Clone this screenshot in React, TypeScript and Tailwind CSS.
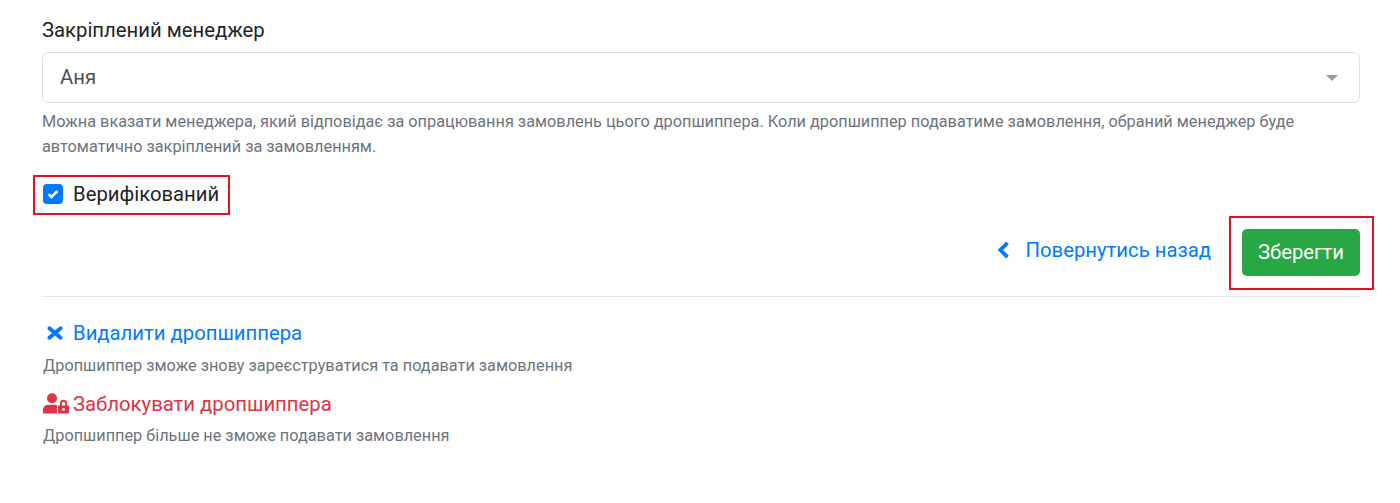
export default function App() {
  return (
    <div className="h-[503px] bg-white px-[42px] pt-[18px] font-['Roboto',sans-serif] text-[#212529] w-[1400px] overflow-hidden">
      <div className="w-[1318px]">
        <div className="text-[20.3px] leading-[24px]">Закріплений менеджер</div>
        <div className="mt-[10px] h-[51px] rounded-[6px] border border-[#dcdfe3] flex items-center justify-between pl-[17px] pr-[21px] text-[20.3px] text-[#495057]">
          <span>Аня</span>
          <span className="w-0 h-0 border-x-[6px] border-x-transparent border-t-[6px] border-t-[#999999]" />
        </div>
        <div className="mt-[6px] text-[16.3px] leading-[25px] text-[#6c757d]">
          Можна вказати менеджера, який відповідає за опрацювання замовлень цього дропшиппера. Коли дропшиппер подаватиме замовлення, обраний менеджер буде автоматично закріплений за замовленням.
        </div>
        <div className="mt-[16px] flex items-center h-[37px]">
          <div className="relative flex items-center gap-[10px] ml-px">
            <span className="w-[20px] h-[20px] rounded-[4px] bg-[#007bff] flex items-center justify-center">
              <svg width="12" height="10" viewBox="0 0 12 10" fill="none"><path d="M1.6 5.2 4.5 8 10.4 2" stroke="#fff" strokeWidth="2.6" /></svg>
            </span>
            <span className="text-[20.3px] leading-[24px]">Верифікований</span>
            <div className="absolute -left-[10px] -top-[7px] -bottom-[9px] -right-[11px] border-2 border-[#e3121f]" />
          </div>
        </div>
        <div className="mt-[17px] flex items-center justify-end">
          <a className="flex items-center text-[20.3px] leading-[24px] -mt-[5px] text-[#007bff]">
            <svg width="13" height="20" viewBox="0 0 13 20" className="mr-[15px]" fill="none"><path d="M9.5 2.8 2.4 10 9.5 17.2" stroke="#007bff" strokeWidth="3.8" /></svg>
            Повернутись назад
          </a>
          <div className="relative ml-[31px]">
            <button className="block w-[118px] h-[47px] rounded-[5px] bg-[#28a745] text-white text-[20.3px]">Зберегти</button>
            <div className="absolute -left-[13px] -top-[13px] -bottom-[14px] -right-[14px] border-2 border-[#e3121f]" />
          </div>
        </div>
        <div className="mt-[20px] border-t border-[#e5e7e9]" />
        <a className="mt-[24px] flex items-center h-[24px] text-[20.3px] text-[#007bff]">
          <svg width="16" height="14" viewBox="0 0 16 14" className="ml-[5px] mr-[10px]" fill="none"><path d="M2.4 2.2 13.6 11.8M13.6 2.2 2.4 11.8" stroke="#007bff" strokeWidth="3.8" strokeLinecap="round" /></svg>
          Видалити дропшиппера
        </a>
        <div className="mt-[9px] ml-px text-[16.3px] leading-[24px] text-[#6c757d]">Дропшиппер зможе знову зареєструватися та подавати замовлення</div>
        <a className="mt-[14px] flex items-center h-[24px] text-[20.3px] text-[#dc3545]">
          <svg width="26" height="21" viewBox="0 0 26 21" className="ml-px mr-[4px] -mt-[2px]" fill="#dc3545">
            <circle cx="9" cy="5.2" r="5" />
            <path d="M1 20.5c-.6 0-1-.4-1-1v-2.5c0-3 2.4-5.2 5.2-5.2h6.6c1 0 1.6.2 2.2.5v8.2H1z" />
            <path fillRule="evenodd" d="M16 12.5h.8v-2a3.7 3.7 0 0 1 7.4 0v2h.8c.6 0 1 .4 1 1v6c0 .6-.4 1-1 1h-9c-.6 0-1-.4-1-1v-6c0-.6.4-1 1-1zm2.8-2v2h3.4v-2a1.7 1.7 0 0 0-3.4 0zm1.7 4.5a1.4 1.4 0 1 0 0 2.8 1.4 1.4 0 0 0 0-2.8z" />
          </svg>
          Заблокувати дропшиппера
        </a>
        <div className="mt-[8px] ml-px text-[16.3px] leading-[24px] text-[#6c757d]">Дропшиппер більше не зможе подавати замовлення</div>
      </div>
    </div>
  );
}
